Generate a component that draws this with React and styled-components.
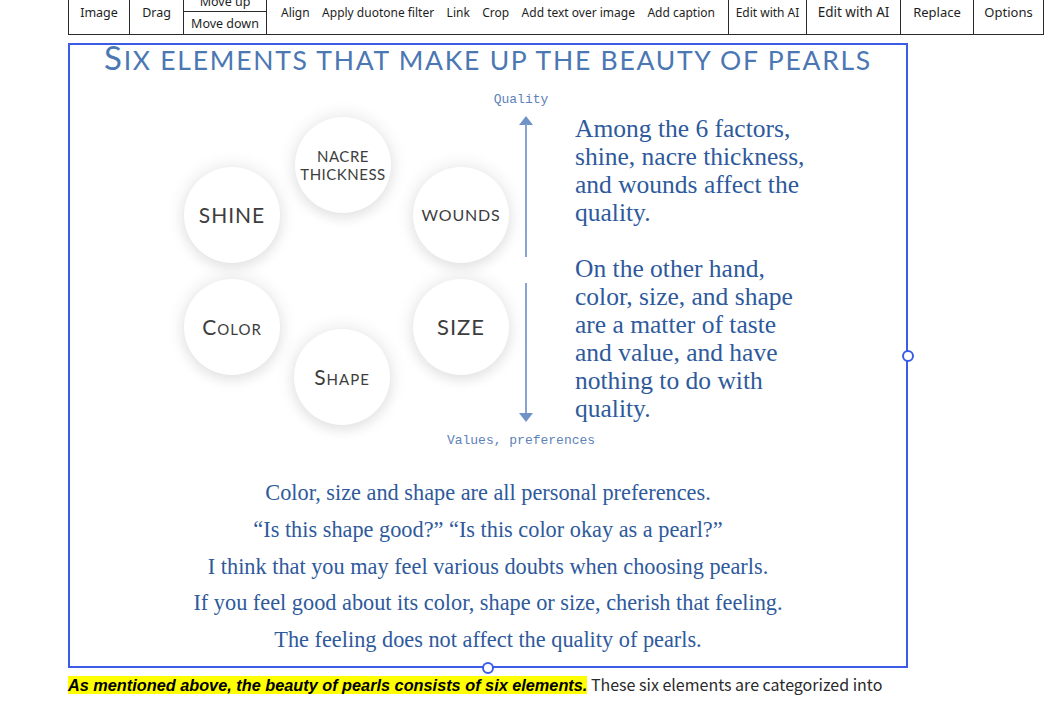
import React from 'react'
import styled, { createGlobalStyle } from 'styled-components'

const GlobalStyle = createGlobalStyle`
  body {
    margin: 0;
    background: #fff;
    font-family: 'Noto Sans', sans-serif;
  }
`

const Page = styled.div`
  padding-left: 68px;
  overflow: hidden;
  height: 719px;
`

const Toolbar = styled.div`
  display: flex;
  width: fit-content;
  height: 45px;
  margin-top: -10px;
  box-sizing: border-box;
  border: 1px solid #2b2b2b;
  background: #fff;
  font-family: 'Noto Sans', sans-serif;
  font-size: 12px;
  color: #1e1e1e;
`

const Cell = styled.div`
  flex: 0 0 ${p => p.$w}px;
  box-sizing: border-box;
  display: flex;
  align-items: center;
  justify-content: center;
  padding-bottom: 1px;
  font-size: ${p => p.$size || 12.5}px;
  border-right: ${p => (p.$last ? 'none' : '1px solid #2b2b2b')};
  white-space: nowrap;
`

const Stack = styled.div`
  flex: 0 0 83px;
  box-sizing: border-box;
  display: flex;
  flex-direction: column;
  border-right: 1px solid #2b2b2b;
  font-size: 12.5px;
`

const Half = styled.div`
  flex: ${p => (p.$top ? '0 0 21px' : '1')};
  box-sizing: border-box;
  display: flex;
  align-items: center;
  justify-content: center;
  border-bottom: ${p => (p.$top ? '1px solid #2b2b2b' : 'none')};
`

const Group = styled.div`
  flex: 0 0 462px;
  box-sizing: border-box;
  display: flex;
  align-items: center;
  justify-content: space-between;
  padding: 0 13px 1px 14px;
  border-right: 1px solid #2b2b2b;
  white-space: nowrap;
`

const Frame = styled.div`
  position: relative;
  width: 840px;
  height: 625px;
  margin-top: 8px;
  box-sizing: border-box;
  border: 2px solid #3d5ce6;
`

const Handle = styled.span`
  position: absolute;
  width: 12px;
  height: 12px;
  box-sizing: border-box;
  border: 2px solid #3d5ce6;
  border-radius: 50%;
  background: #fff;
  ${p =>
    p.$side === 'right'
      ? 'right: -8px; top: 50%; transform: translateY(-50%);'
      : 'bottom: -8px; left: 50%; transform: translateX(-50%);'}
`

const Figure = styled.div`
  display: flex;
  flex-direction: column;
  background: #fff;
`

const Title = styled.h1`
  margin: -2px 0 0;
  font-family: Lato, sans-serif;
  font-weight: 400;
  font-size: 26.5px;
  line-height: 28px;
  letter-spacing: 1.75px;
  text-align: center;
  color: #4b77b3;
  white-space: nowrap;
`

const Initial = styled.span`
  font-size: 33px;
`

const Body = styled.div`
  display: flex;
  height: 358px;
  margin-top: 18px;
`

const Diagram = styled.div`
  position: relative;
  flex: 0 0 420px;
`

const Pearl = styled.div`
  position: absolute;
  left: ${p => p.$x - 48}px;
  top: ${p => p.$y - 48}px;
  width: 96px;
  height: 96px;
  border-radius: 50%;
  background: #fff;
  box-shadow: 0 0 16px 4px rgba(0, 0, 0, 0.07), 0 5px 12px rgba(0, 0, 0, 0.06);
  display: flex;
  align-items: center;
  justify-content: center;
  text-align: center;
  font-family: Lato, sans-serif;
  font-weight: 400;
  color: #3d3d3d;
  font-size: ${p => p.$size}px;
  line-height: 1.2;
  letter-spacing: ${p => p.$ls || 0.5}px;
  font-variant: ${p => (p.$smallCaps ? 'small-caps' : 'normal')};
`

const Axis = styled.div`
  flex: 0 0 72px;
  width: 72px;
  min-width: 0;
  display: flex;
  flex-direction: column;
  align-items: center;
`

const AxisLabel = styled.div`
  margin-top: ${p => p.$mt || 0}px;
  margin-right: 10px;
  font-family: 'Liberation Mono', monospace;
  font-size: 13px;
  line-height: 16px;
  color: #5d82b8;
  white-space: nowrap;
`

const Arrow = styled.svg`
  display: block;
  flex-shrink: 0;
  margin-top: ${p => p.$mt}px;
`

const Notes = styled.div`
  padding: 23px 0 0 13px;
  font-family: 'Liberation Serif', serif;
  font-size: 25.5px;
  line-height: 28px;
  color: #2e5a9c;
  white-space: nowrap;
`

const Note = styled.p`
  margin: 0 0 28px;
`

const Closing = styled.div`
  margin-top: 25px;
  font-family: 'Liberation Serif', serif;
  font-size: 22.3px;
  line-height: 36.75px;
  color: #2e5a9c;
  text-align: center;
  white-space: nowrap;
`

const Paragraph = styled.p`
  margin: 6px 0 0;
  font-family: 'Noto Sans CJK JP', 'Noto Sans', sans-serif;
  font-size: 16px;
  line-height: 20px;
  color: #2a2a2a;
  white-space: nowrap;
`

const Highlight = styled.em`
  background: #ffff00;
  color: #000;
  font-family: 'Liberation Sans', sans-serif;
  font-weight: 700;
  font-style: italic;
  font-size: 16.3px;
`

const pearls = [
  { x: 273, y: 73, size: 15, lines: ['NACRE', 'THICKNESS'] },
  { x: 162, y: 123, size: 21, lines: ['SHINE'], ls: 1 },
  { x: 391, y: 123, size: 16, lines: ['WOUNDS'], ls: 0.8 },
  { x: 162, y: 235, size: 21, lines: ['Color'], smallCaps: true, ls: 1 },
  { x: 391, y: 235, size: 22, lines: ['SIZE'], ls: 1 },
  { x: 272, y: 285, size: 21, lines: ['Shape'], smallCaps: true, ls: 1 },
]

const tools = ['Align', 'Apply duotone filter', 'Link', 'Crop', 'Add text over image', 'Add caption']

const closing = [
  'Color, size and shape are all personal preferences.',
  '\u201CIs this shape good?\u201D \u201CIs this color okay as a pearl?\u201D',
  'I think that you may feel various doubts when choosing pearls.',
  'If you feel good about its color, shape or size, cherish that feeling.',
  'The feeling does not affect the quality of pearls.',
]

const App = () => {
  return (
    <Page>
      <GlobalStyle />
      <Toolbar>
        <Cell $w={61}>Image</Cell>
        <Cell $w={54}>Drag</Cell>
        <Stack>
          <Half $top>Move up</Half>
          <Half>Move down</Half>
        </Stack>
        <Group>
          {tools.map(t => (
            <span key={t}>{t}</span>
          ))}
        </Group>
        <Cell $w={78} $size={12}>Edit with AI</Cell>
        <Cell $w={94} $size={13.5}>Edit with AI</Cell>
        <Cell $w={73} $size={13}>Replace</Cell>
        <Cell $w={69} $size={13} $last>Options</Cell>
      </Toolbar>

      <Frame>
        <Figure>
          <Title>
            <Initial>S</Initial>IX ELEMENTS THAT MAKE UP THE BEAUTY OF PEARLS
          </Title>
          <Body>
            <Diagram>
              {pearls.map(p => (
                <Pearl key={p.lines[0]} $x={p.x} $y={p.y} $size={p.size} $ls={p.ls} $smallCaps={p.smallCaps}>
                  <div>
                    {p.lines.map(l => (
                      <div key={l}>{l}</div>
                    ))}
                  </div>
                </Pearl>
              ))}
            </Diagram>
            <Axis>
              <AxisLabel>Quality</AxisLabel>
              <Arrow $mt={8} width="16" height="141" viewBox="0 0 16 141">
                <polygon points="1,9 8,0 15,9" fill="#6f93c6" />
                <line x1="8" y1="8" x2="8" y2="141" stroke="#86a4cf" strokeWidth="2" />
              </Arrow>
              <Arrow $mt={26} width="16" height="139" viewBox="0 0 16 139">
                <line x1="8" y1="0" x2="8" y2="131" stroke="#86a4cf" strokeWidth="2" />
                <polygon points="1,130 8,139 15,130" fill="#6f93c6" />
              </Arrow>
              <AxisLabel $mt={11}>Values, preferences</AxisLabel>
            </Axis>
            <Notes>
              <Note>
                Among the 6 factors,<br />
                shine, nacre thickness,<br />
                and wounds affect the<br />
                quality.
              </Note>
              <Note>
                On the other hand,<br />
                color, size, and shape<br />
                are a matter of taste<br />
                and value, and have<br />
                nothing to do with<br />
                quality.
              </Note>
            </Notes>
          </Body>
          <Closing>
            {closing.map(l => (
              <div key={l}>{l}</div>
            ))}
          </Closing>
        </Figure>
        <Handle $side="right" />
        <Handle $side="bottom" />
      </Frame>

      <Paragraph>
        <Highlight>As mentioned above, the beauty of pearls consists of six elements.</Highlight> These six elements are categorized into
      </Paragraph>
    </Page>
  )
}

export default App
